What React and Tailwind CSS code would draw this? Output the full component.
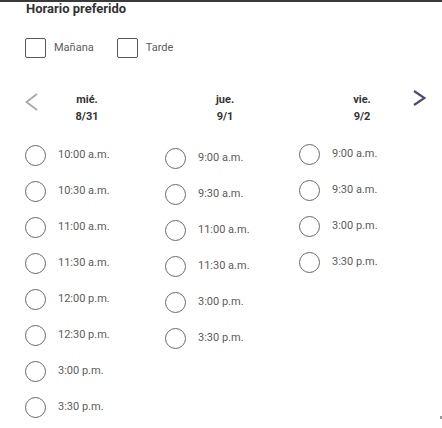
import React from "react";

const days = [
  {
    day: "mié.",
    date: "8/31",
    slots: ["10:00 a.m.", "10:30 a.m.", "11:00 a.m.", "11:30 a.m.", "12:00 p.m.", "12:30 p.m.", "3:00 p.m.", "3:30 p.m."],
    offset: "pt-0",
  },
  {
    day: "jue.",
    date: "9/1",
    slots: ["9:00 a.m.", "9:30 a.m.", "11:00 a.m.", "11:30 a.m.", "3:00 p.m.", "3:30 p.m."],
    offset: "pt-[3px]",
  },
  {
    day: "vie.",
    date: "9/2",
    slots: ["9:00 a.m.", "9:30 a.m.", "3:00 p.m.", "3:30 p.m."],
    offset: "-mt-[1px]",
  },
];

function Checkbox({ label }) {
  return (
    <label className="flex items-center gap-[8px]">
      <span className="w-[21px] h-[20px] border border-[#5a5a5a] rounded-[2px]" />
      <span className="text-[11px] text-[#5c5c5c]">{label}</span>
    </label>
  );
}

function Slot({ time }) {
  return (
    <div className="flex items-center h-[36px] gap-[12px]">
      <span className="w-[21px] h-[21px] rounded-full border border-[#6a6a6a] shrink-0" />
      <span className="text-[11px] text-[#5c5c5c]">{time}</span>
    </div>
  );
}

export default function App() {
  return (
    <div className="relative w-[442px] h-[428px] bg-white overflow-hidden font-['Roboto','Liberation_Sans',sans-serif]">
      {/* Top rule */}
      <div className="h-[2px] bg-[#3a3a3a]" />

      {/* Title */}
      <div className="pl-[26px] text-[13px] leading-[13px] font-bold text-[#333]">
        Horario preferido
      </div>

      {/* Period filters */}
      <div className="flex items-center gap-[23px] pl-[25px] mt-[23px]">
        <Checkbox label="Mañana" />
        <Checkbox label="Tarde" />
      </div>

      {/* Day header */}
      <div className="flex items-start pl-[25px] mt-[33px] h-[34px]">
        <svg width="13" height="18" viewBox="0 0 13 18" className="mt-[2px] shrink-0">
          <path d="M12 1 L1.5 9 L12 17" fill="none" stroke="#aaaaaa" strokeWidth="2" />
        </svg>
        {days.map((d, i) => (
          <div
            key={d.day}
            className={
              "w-[60px] text-center text-[11px] leading-[17px] font-bold text-[#333] " +
              (i === 0 ? "ml-[19px]" : i === 1 ? "ml-[78px]" : "ml-[77px]")
            }
          >
            <div>{d.day}</div>
            <div>{d.date}</div>
          </div>
        ))}
        <svg width="13" height="16" viewBox="0 0 13 16" className="ml-[21px] -mt-[1px] shrink-0">
          <path d="M1 1 L11.5 8 L1 15" fill="none" stroke="#4b4a73" strokeWidth="2.2" />
        </svg>
      </div>

      {/* Time slots */}
      <div className="grid grid-cols-[140px_134px_1fr] pl-[25px] mt-[12px]">
        {days.map((d) => (
          <div key={d.day} className={"flex flex-col " + d.offset}>
            {d.slots.map((t) => (
              <Slot key={t} time={t} />
            ))}
          </div>
        ))}
      </div>

      <div className="absolute right-0 top-[416px] w-[2px] h-[3px] bg-[#999]" />
    </div>
  );
}
